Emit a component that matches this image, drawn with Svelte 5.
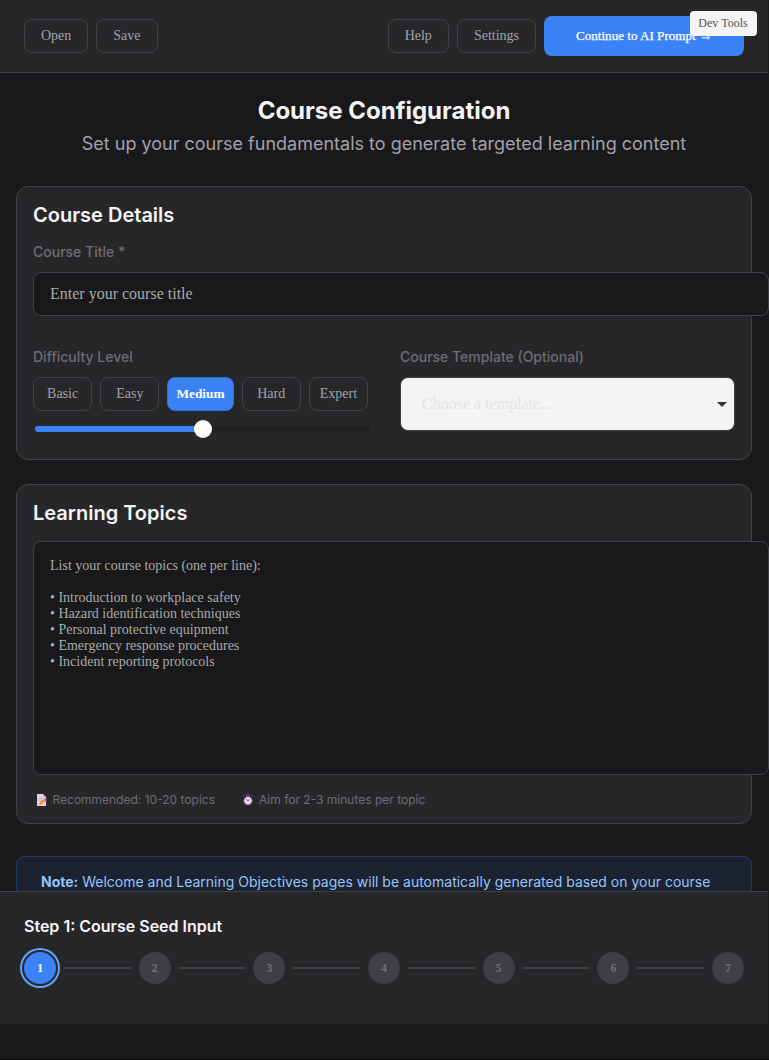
<script>
  const levels = ['Basic', 'Easy', 'Medium', 'Hard', 'Expert'];
  const steps = [1, 2, 3, 4, 5, 6, 7];
  const placeholder = [
    'List your course topics (one per line):',
    '',
    '• Introduction to workplace safety',
    '• Hazard identification techniques',
    '• Personal protective equipment',
    '• Emergency response procedures',
    '• Incident reporting protocols'
  ].join('\n');
</script>

<div class="page">
  <header>
    <div class="group">
      <button>Open</button>
      <button>Save</button>
    </div>
    <div class="group">
      <button>Help</button>
      <button>Settings</button>
      <button class="primary">Continue to AI Prompt →</button>
    </div>
  </header>
  <button class="dev">Dev Tools</button>

  <main>
    <h1>Course Configuration</h1>
    <p class="sub">Set up your course fundamentals to generate targeted learning content</p>

    <section class="card details">
      <h2>Course Details</h2>
      <div class="label">Course Title *</div>
      <input class="title" placeholder="Enter your course title" />
      <div class="cols">
        <div>
          <div class="label">Difficulty Level</div>
          <div class="levels">
            {#each levels as level}
              <button class:active={level === 'Medium'}>{level}</button>
            {/each}
          </div>
          <div class="slider"><span class="fill"></span><span class="thumb"></span></div>
        </div>
        <div>
          <div class="label">Course Template (Optional)</div>
          <div class="select">
            <span>Choose a template...</span>
            <svg width="10" height="5" viewBox="0 0 10 5"><path d="M0 0h10L5 5z" fill="#2e3436" /></svg>
          </div>
        </div>
      </div>
    </section>

    <section class="card topics">
      <h2>Learning Topics</h2>
      <textarea {placeholder}></textarea>
      <div class="hints">
        <span class="hint">
          <svg width="12" height="12" viewBox="0 0 12 12">
            <path d="M1 0h6.2L10 3v9H1z" fill="#dcd5e2" />
            <path d="M7.2 0v3H10z" fill="#aaa0b5" />
            <path d="M2.3 4.4h5M2.3 6.3h4" stroke="#b3abbc" stroke-width=".8" />
            <path d="M2.8 11l1-2.8 4.5-3.2 1.5 2-4.5 3.4z" fill="#ff8a3d" />
            <path d="M8.1 5.2l1.7-.9 1.3 1.9-1.4 1.1z" fill="#f0495c" />
          </svg>
          Recommended: 10-20 topics
        </span>
        <span class="hint">
          <svg width="12" height="12" viewBox="0 0 12 12">
            <path d="M4.7.7h2.6v2H4.7zM1.3 2.9l1.5-1.5M10.7 2.9L9.2 1.4" fill="#563b83" stroke="#563b83" stroke-width="1.2" />
            <circle cx="6" cy="6.7" r="4.2" fill="#e6dfe9" stroke="#64488a" stroke-width=".9" />
            <path d="M3.7 4.7L6 6.7l1.7-1.4" fill="none" stroke="#d94177" stroke-width=".9" />
            <circle cx="6" cy="6.7" r=".8" fill="#d94177" />
          </svg>
          Aim for 2-3 minutes per topic
        </span>
      </div>
    </section>

    <div class="note">
      <strong>Note:</strong> Welcome and Learning Objectives pages will be automatically generated based on your course
    </div>
  </main>

  <footer>
    <h3>Step 1: Course Seed Input</h3>
    <div class="steps">
      {#each steps as step}
        {#if step > 1}<i></i>{/if}
        <b class:current={step === 1}>{step}</b>
      {/each}
    </div>
  </footer>
</div>

<style>
  :global(body) { background: #18181b; overflow: hidden; }
  :global(*) { box-sizing: border-box; }
  .page {
    position: relative;
    width: 769px;
    height: 1060px;
    overflow: hidden;
    background: #19191b;
    border-bottom: 1px solid #0d0d0f;
    font-family: Inter, sans-serif;
    color: #f4f4f5;
  }
  button, input, textarea { font-family: "Liberation Serif", serif; }
  header {
    width: 768px;
    height: 73px;
    padding: 16px 24px;
    display: flex;
    justify-content: space-between;
    align-items: center;
    background: #27272a;
    border-bottom: 1px solid #3f3f46;
  }
  .group { display: flex; align-items: center; gap: 8px; }
  button {
    height: 34px;
    padding: 0 16px;
    border: 1px solid #3f3f46;
    border-radius: 8px;
    background: transparent;
    color: #a1a1aa;
    font-size: 14px;
  }
  header .primary {
    width: 200px;
    height: 40px;
    padding: 0 32px;
    border: 0;
    background: #3b82f6;
    color: #fff;
    font-size: 13.1px;
    text-align: left;
    white-space: nowrap;
    -webkit-text-stroke: 0.25px #fff;
  }
  .dev {
    position: absolute;
    left: 690px;
    top: 11px;
    width: 67px;
    height: 25px;
    padding: 0 1px 0 0;
    border: 0;
    border-radius: 4px;
    background: #f4f4f4;
    color: #555;
    font-size: 12px;
  }
  main { width: 768px; height: 818px; padding: 20px 16px 0; }
  h1, h2, h3, p { margin: 0; }
  h1 { font-size: 24px; line-height: 36px; font-weight: 700; text-align: center; }
  .sub { padding-top: 1px; font-size: 18px; line-height: 28px; color: #a1a1aa; text-align: center; }
  .card {
    padding: 16px;
    background: #27272a;
    border: 1px solid #3f3f46;
    border-radius: 12px;
  }
  .details { height: 274px; margin-top: 28px; }
  .topics { height: 340px; margin-top: 24px; }
  h2 { font-size: 20px; line-height: 24px; font-weight: 600; }
  .label { font-size: 14px; line-height: 20px; font-weight: 500; color: #6c6c74; }
  h2 + .label { margin-top: 15px; }
  .title, textarea {
    display: block;
    width: 736px;
    background: #19191b;
    border: 1px solid #3f3f46;
    border-radius: 8px;
    outline: 0;
    resize: none;
    color: #f4f4f5;
  }
  .title { height: 44px; margin-top: 10px; padding: 0 16px; font-size: 16px; }
  ::placeholder { color: #a9a9a9; opacity: 1; }
  .cols { display: grid; grid-template-columns: 335px 335px; gap: 32px; margin-top: 31px; }
  .levels { display: flex; gap: 8px; margin-top: 10px; }
  .levels button { flex: 1 1 0; padding: 0 8px; }
  .levels .active {
    flex: 0 0 66px;
    background: #3b82f6;
    border-color: #2f6fe0;
    color: #fff;
    font-size: 13.33px;
    font-weight: 600;
  }
  .slider {
    position: relative;
    width: 335px;
    height: 6px;
    margin: 15px 0 0 2px;
    border-radius: 3px;
    background: #202022;
  }
  .fill { display: block; width: 50%; height: 6px; border-radius: 3px; background: #3b82f6; }
  .thumb {
    position: absolute;
    left: 158.5px;
    top: -6px;
    width: 18px;
    height: 18px;
    border-radius: 50%;
    background: #fff;
  }
  .select {
    height: 54px;
    margin-top: 10px;
    padding: 0 7px 0 21px;
    display: flex;
    align-items: center;
    justify-content: space-between;
    border: 1px solid #3f3f46;
    border-radius: 8px;
    background: #f4f4f4;
    color: #e4e4e7;
    font: 16px "Liberation Serif", serif;
  }
  textarea { height: 234px; margin-top: 16px; padding: 16px; font-size: 14px; line-height: 16px; }
  .hints { display: flex; gap: 27px; margin-top: 16px; padding-left: 3px; font-size: 12px; line-height: 18px; color: #6c6c74; }
  .hint { display: flex; align-items: center; gap: 5px; }
  .hint:first-child { gap: 4.5px; }
  .note {
    height: 70px;
    margin-top: 32px;
    padding: 14px 24px;
    border: 1px solid #1e3a6d;
    border-radius: 8px;
    background: #1c2230;
    color: #93c5fd;
    font-size: 14px;
    line-height: 21px;
    white-space: nowrap;
  }
  footer {
    position: relative;
    width: 768px;
    height: 133px;
    padding: 24px 24px 0;
    background: #27272a;
    border-top: 1px solid #3f3f46;
  }
  h3 { font-size: 16px; line-height: 21px; font-weight: 600; }
  .steps { display: flex; align-items: center; gap: 8px; margin-top: 15px; }
  .steps b {
    width: 32px;
    height: 32px;
    padding-bottom: 1px;
    border-radius: 50%;
    display: flex;
    align-items: center;
    justify-content: center;
    background: #3f3f46;
    color: #71717a;
    font: 600 11.5px "Liberation Serif", serif;
  }
  .steps i { flex: 1; height: 2px; background: #3f3f46; }
  .steps .current { background: #3b82f6; color: #fff; box-shadow: 0 0 0 2px #27272a, 0 0 0 4px #60a5fa; }
</style>
